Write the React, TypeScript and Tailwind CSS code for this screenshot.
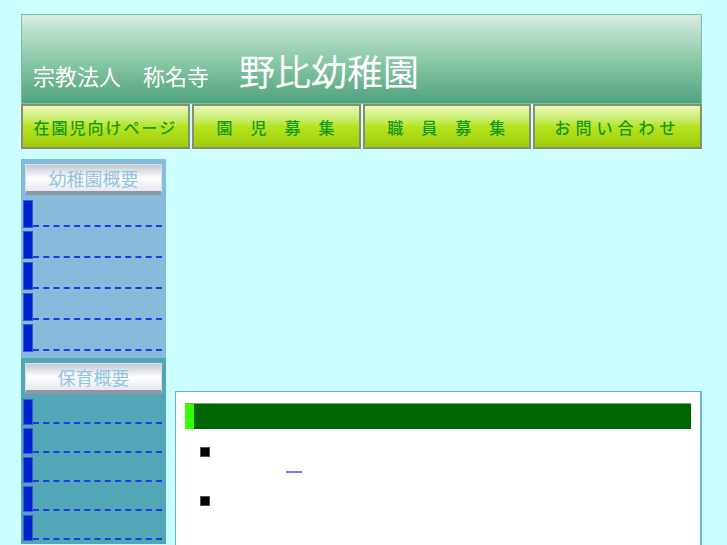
import React from "react";

const jp = "font-['Noto_Sans_CJK_JP','Noto_Sans',sans-serif]";

const navItems = [
  { label: "在園児向けページ", cls: "tracking-[2px]" },
  { label: "園　児　募　集", cls: "tracking-[1px]" },
  { label: "職　員　募　集", cls: "tracking-[1px]" },
  { label: "お問い合わせ", cls: "tracking-[5px]" },
];

function SideTitle({ text }: { text: string }) {
  return (
    <div className="mx-[4px] h-[31px] flex items-center justify-center border border-[#d8dde6] border-b-[4px] border-b-[#8e95a6] bg-gradient-to-b from-[#c3c8d3] via-white to-[#e6e8ee]">
      <span className="text-[18px] leading-none text-[#93c4df]">{text}</span>
    </div>
  );
}

function SideItem({ h }: { h: string }) {
  return (
    <div className={`flex items-end ${h}`}>
      <div className="w-[10px] h-full bg-[#0022cc] border border-[#3a58d8]" />
      <div className="flex-1 border-b-2 border-dashed border-[#1a3de6] mb-[1px] mr-[2px]" />
    </div>
  );
}

export default function App() {
  return (
    <div className={`min-h-screen bg-[#ccffff] ${jp} px-[21px] pt-[14px]`}>
      {/* header */}
      <div className="w-[681px] h-[90px] border border-[#7fbfa4] bg-gradient-to-b from-[#d8ebe2] via-[#8ccaa9] to-[#4fa27f] flex items-end pb-[17px] pl-[11px] text-white">
        <span className="text-[22px] leading-none">宗教法人　称名寺</span>
        <span className="text-[36px] leading-none ml-[30px] mb-[-2px]">野比幼稚園</span>
      </div>

      {/* nav */}
      <div className="flex gap-[2px] w-[681px]">
        {navItems.map((n) => (
          <div
            key={n.label}
            className="flex-1 h-[45px] border-2 border-[#8c8c70] bg-gradient-to-b from-[#eaf9b8] via-[#b6e41c] to-[#9fcc0b] flex items-center justify-center"
          >
            <span className={`text-[16px] font-medium text-[#14991a] ${n.cls}`}>{n.label}</span>
          </div>
        ))}
      </div>

      <div className="flex mt-[10px] items-start">
        {/* sidebar */}
        <div className="w-[145px]">
          <div className="bg-[#87bbdc] pt-[5px] pb-[6px] flex flex-col gap-[4px]">
            <div className="mb-[1px]">
              <SideTitle text="幼稚園概要" />
            </div>
            <div className="px-[2px] flex flex-col gap-[3px]">
              <SideItem h="h-[28px]" />
              <SideItem h="h-[28px]" />
              <SideItem h="h-[28px]" />
              <SideItem h="h-[28px]" />
              <SideItem h="h-[28px]" />
            </div>
          </div>
          <div className="bg-[#52a6b5] pt-[5px] pb-[3px] flex flex-col gap-[5px]">
            <SideTitle text="保育概要" />
            <div className="px-[2px] flex flex-col gap-[3px]">
              <SideItem h="h-[26px]" />
              <SideItem h="h-[26px]" />
              <SideItem h="h-[26px]" />
              <SideItem h="h-[26px]" />
              <SideItem h="h-[26px]" />
            </div>
          </div>
        </div>

        {/* main */}
        <div className="ml-[9px] mt-[232px] w-[527px] h-[160px] bg-white border border-[#6aaee8] border-r-2 pt-[11px] px-[9px]">
          <div className="h-[26px] flex border-t border-[#7fa07f] bg-[#006600]">
            <div className="w-[9px] bg-[#33ff00]" />
          </div>
          <div className="mt-[16px] pl-[15px] text-[16px] leading-[24px]">
            <div className="flex items-center h-[14px]">
              <span className="w-[10px] h-[10px] bg-black border border-[#555]" />
            </div>
            <div className="h-[14px] pl-[86px] flex items-end">
              <a className="w-[16px] h-[11px] border-b-2 border-[#7777ff]"></a>
            </div>
            <div className="flex items-center h-[10px] mt-[23px]">
              <span className="w-[10px] h-[10px] bg-black border border-[#555]" />
            </div>
          </div>
        </div>
      </div>
    </div>
  );
}
